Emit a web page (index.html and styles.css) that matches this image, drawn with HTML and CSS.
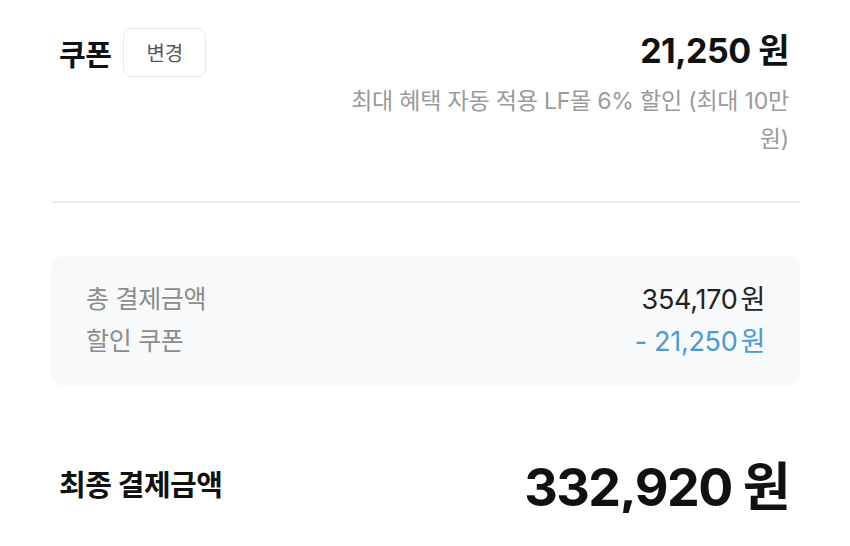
FILE: index.html
```html
<!DOCTYPE html>
<html lang="ko">
<head>
<meta charset="utf-8">
<title>결제금액</title>
<link rel="stylesheet" href="styles.css">
</head>
<body>
<main class="checkout">
  <section class="coupon">
    <div class="coupon-head">
      <h2 class="coupon-title">쿠폰</h2>
      <button class="btn-change" type="button">변경</button>
    </div>
    <div class="coupon-info">
      <p class="coupon-amount">21,250 원</p>
      <p class="coupon-desc">최대 혜택 자동 적용 LF몰 6% 할인 (최대 10만 원)</p>
    </div>
  </section>

  <hr class="divider">

  <section class="summary">
    <div class="summary-row">
      <span class="summary-label">총 결제금액</span>
      <span class="summary-value">354,170<span class="unit">원</span></span>
    </div>
    <div class="summary-row">
      <span class="summary-label">할인 쿠폰</span>
      <span class="summary-value discount">- 21,250<span class="unit">원</span></span>
    </div>
  </section>

  <section class="total">
    <h3 class="total-label">최종 결제금액</h3>
    <p class="total-amount">332,920 원</p>
  </section>
</main>
</body>
</html>
```

FILE: styles.css
```css
* {
  box-sizing: border-box;
}

body {
  margin: 0;
  background: #ffffff;
  font-family: "Inter", "Noto Sans CJK KR", sans-serif;
  color: #111111;
}

.checkout {
  width: 800px;
  padding: 28px 0 0 51px;
}

/* coupon block */
.coupon {
  display: flex;
  justify-content: space-between;
  align-items: flex-start;
  padding: 0 11px 43px 8px;
}

.coupon-head {
  display: flex;
  align-items: center;
  gap: 12px;
  height: 49px;
}

.coupon-title {
  margin: 0;
  font-size: 29px;
  font-weight: 700;
  letter-spacing: -0.5px;
}

.btn-change {
  width: 83px;
  height: 49px;
  border: 1.5px solid #e9e9e9;
  border-radius: 8px;
  background: #ffffff;
  font-family: inherit;
  font-size: 20px;
  color: #555555;
}

.coupon-info {
  display: flex;
  flex-direction: column;
  align-items: flex-end;
}

.coupon-amount {
  margin: 0;
  height: 49px;
  line-height: 46px;
  font-size: 34px;
  font-weight: 700;
  letter-spacing: -0.5px;
}

.coupon-desc {
  margin: 5px 0 0;
  width: 460px;
  text-align: right;
  font-size: 23px;
  line-height: 38px;
  color: #9a9a9a;
  letter-spacing: -0.2px;
}

.divider {
  margin: 0;
  border: 0;
  border-top: 2px solid #eeeeee;
}

/* price summary box */
.summary {
  margin-top: 53px;
  padding: 20px 35px 26px;
  background: #f7f9fb;
  border-radius: 14px;
  display: flex;
  flex-direction: column;
}

.summary-row {
  display: flex;
  justify-content: space-between;
  align-items: center;
  height: 42px;
}

.summary-label {
  font-size: 25px;
  letter-spacing: -0.3px;
  color: #8c8c8c;
}

.summary-value {
  font-size: 27px;
  letter-spacing: -0.3px;
  color: #222222;
}

.summary-value .unit {
  margin-left: 3px;
}

.summary-value.discount {
  color: #4a9ad6;
}

/* final total */
.total {
  display: flex;
  justify-content: space-between;
  align-items: center;
  height: 60px;
  margin-top: 67px;
  padding: 0 11px 0 8px;
}

.total-label {
  margin: 0;
  font-size: 29px;
  font-weight: 700;
  letter-spacing: -0.5px;
}

.total-amount {
  margin: 0;
  font-size: 52px;
  font-weight: 700;
  letter-spacing: -1.5px;
}
```
